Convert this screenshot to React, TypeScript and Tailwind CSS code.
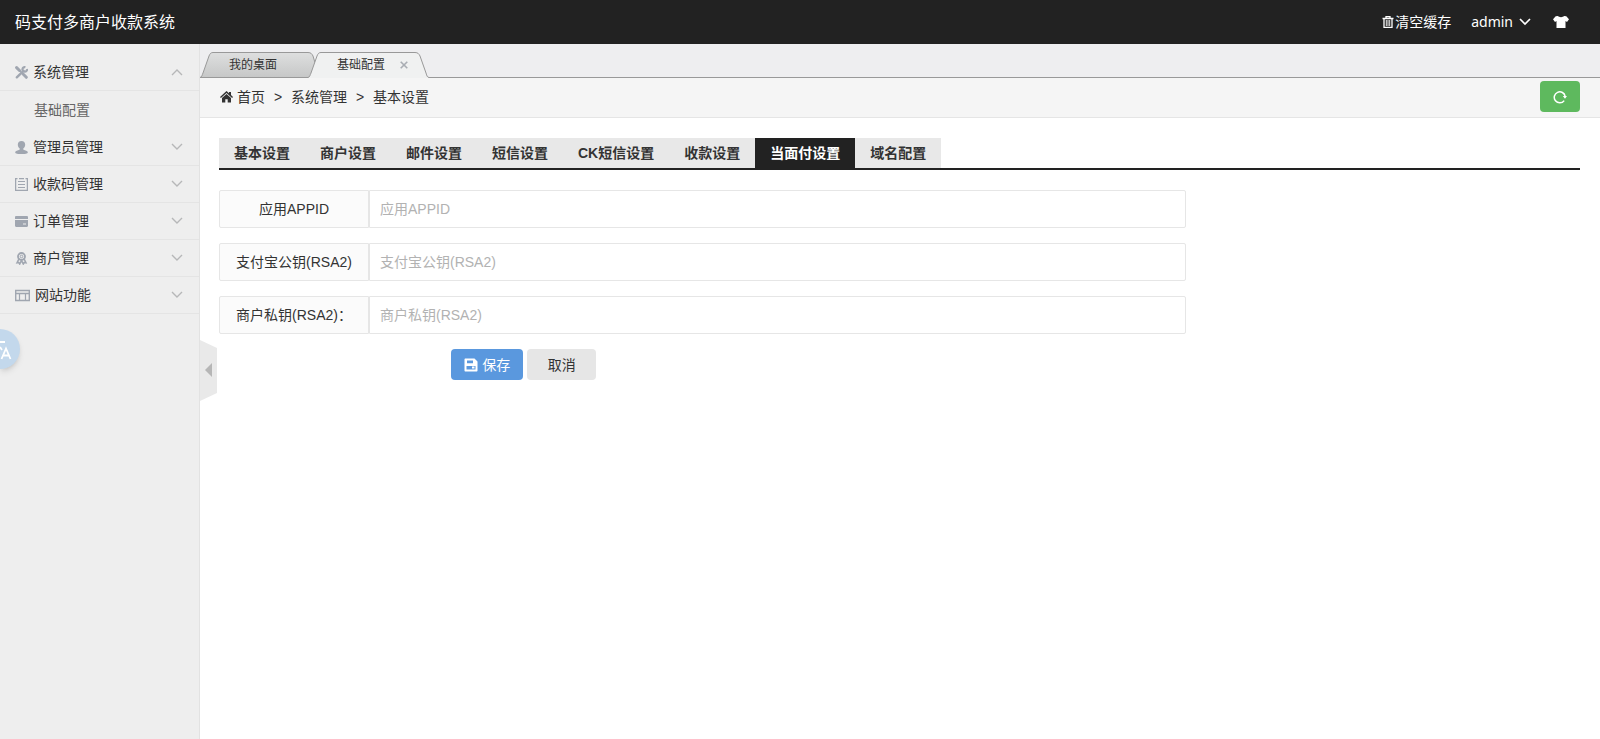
import { useState } from 'react';
import type { ReactNode } from 'react';

function ToolsIcon() {
  return (
    <svg className="size-[13px]" viewBox="0 0 13 13" fill="none" stroke="currentColor" aria-hidden="true">
      <path d="M1.600 1.600 4.500 4.500" strokeWidth="3" strokeLinecap="round" />
      <path d="M4.500 4.500l4 4" strokeWidth="1.200" />
      <path d="M8.300 8.300l3 3" strokeWidth="3" strokeLinecap="round" />
      <path d="M1.800 11.300 8.500 4.800" strokeWidth="2.400" strokeLinecap="round" />
      <path d="M10.400 1.200A2.300 2.300 0 1 0 12 3" strokeWidth="2.200" />
    </svg>
  );
}

function UserIcon() {
  return (
    <svg className="size-[13px]" viewBox="0 0 13 13" fill="currentColor" aria-hidden="true">
      <path d="M6.500 0C8.900 0 10.200 1.500 10.200 3.800 10.200 5.300 9.400 6.800 8.300 7.500v.7c0 .4.3.5.800.700 2.200.6 3.700 1.100 3.700 2.500 0 1.300-3 1.600-6.300 1.600S.2 12.700.2 11.400c0-1.400 1.500-1.900 3.700-2.500.5-.2.800-.3.800-.7v-.7C3.600 6.800 2.800 5.300 2.800 3.800 2.800 1.500 4.100 0 6.500 0z" />
    </svg>
  );
}

function ListIcon() {
  return (
    <svg className="size-[13px]" viewBox="0 0 13 13" fill="none" stroke="currentColor" aria-hidden="true">
      <path d="M2.500.6H.6v11.800h11.800V.6h-1.900M4 .6h5" strokeWidth="1.300" />
      <path d="M3 3.500h7M3 6.500h7M3 9.500h7" strokeWidth="1.100" />
    </svg>
  );
}

function CardIcon() {
  return (
    <svg className="size-[13px]" viewBox="0 0 13 13" fill="currentColor" aria-hidden="true">
      <path d="M1.200 1h10.600c.7 0 1.200.5 1.200 1.200V4H0V2.200C0 1.500.5 1 1.200 1zM0 5h13v5.800c0 .7-.5 1.200-1.200 1.200H1.200C.5 12 0 11.500 0 10.800zM8 8.500v1h3v-1z" fillRule="evenodd" />
    </svg>
  );
}

function MedalIcon() {
  return (
    <svg className="size-[13px]" viewBox="0 0 13 13" fill="none" stroke="currentColor" aria-hidden="true">
      <circle cx="6.500" cy="4.500" r="3.500" strokeWidth="1.800" />
      <circle cx="6.500" cy="4.500" r="1.300" strokeWidth="1" />
      <path d="M3.800 7.200 2 10.800l1.800-.2.900 1.500 1.800-3.600 1.800 3.600.9-1.500 1.800.2-1.800-3.600" strokeWidth="1.500" />
    </svg>
  );
}

function LayoutIcon() {
  return (
    <svg className="h-[13px] w-[15px]" viewBox="0 0 15 13" fill="none" stroke="currentColor" aria-hidden="true">
      <path d="M.700 1.500h13.600v10H.700zM.700 4.500h13.600" strokeWidth="1.400" />
      <path d="M4.500 4.500v7M10.500 4.500v7" strokeWidth="1.200" />
    </svg>
  );
}

function Chevron({ up = false, bold = false }: { up?: boolean; bold?: boolean }) {
  return (
    <svg className={up ? 'h-2 w-3 rotate-180' : 'h-2 w-3'} viewBox="0 0 12 8" fill="none" stroke="currentColor" strokeWidth={bold ? 1.7 : 1.4} aria-hidden="true">
      <path d="M1 1l5 5 5-5" />
    </svg>
  );
}

function TrashIcon() {
  return (
    <svg className="size-3" viewBox="0 0 12 12" fill="none" stroke="currentColor" aria-hidden="true">
      <path d="M.5 2.500h11M4 2.500V.7h4v1.800M2 2.500v8.800h8V2.500" strokeWidth="1.300" />
      <path d="M4.300 4v6M6 4v6M7.700 4v6" strokeWidth=".9" />
    </svg>
  );
}

function ShirtIcon() {
  return (
    <svg className="h-3 w-4" viewBox="0 0 16 12" fill="currentColor" aria-hidden="true">
      <path d="M5 0c.7 1.500 5.300 1.500 6 0l2.300.3L16 3.300l-2 2.700-1.500-.9V12h-9V5.100L2 6 0 3.300 2.700.3z" />
    </svg>
  );
}

function HomeIcon() {
  return (
    <svg className="h-3 w-[13px]" viewBox="0 0 13 12" fill="currentColor" aria-hidden="true">
      <path d="M6.500 0 9 2.300V1h2v3.100L13 6l-.9 1L6.500 2 .9 7 0 6z" />
      <path d="M6.500 2.900 11 6.900V11.500H7.700V8.300H5.300v3.200H2V6.900z" />
    </svg>
  );
}

function RefreshIcon() {
  return (
    <svg className="size-[14px]" viewBox="0 0 14 14" fill="none" stroke="currentColor" aria-hidden="true">
      <path d="M11.200 10.600A5.500 5.500 0 1 1 12.200 6.500" strokeWidth="1.500" />
      <path d="M9.800 6h4.200l-2 2.800z" fill="currentColor" stroke="none" />
    </svg>
  );
}

function SaveIcon() {
  return (
    <svg className="size-[14px]" viewBox="0 0 14 14" fill="currentColor" fillRule="evenodd" aria-hidden="true">
      <path d="M1.500.5h9L13.500 3.500v9c0 .6-.4 1-1 1h-11c-.6 0-1-.4-1-1v-11c0-.6.4-1 1-1zM3 2.500v2.700h6V2.500zM2.500 8v3.500h9V8z" />
      <path d="M8 8.500h2.500v2H8z" />
    </svg>
  );
}

type MenuEntry = { label: string; icon: ReactNode; items?: string[] };

const menu: MenuEntry[] = [
  { label: '系统管理', icon: <ToolsIcon />, items: ['基础配置'] },
  { label: '管理员管理', icon: <UserIcon /> },
  { label: '收款码管理', icon: <ListIcon /> },
  { label: '订单管理', icon: <CardIcon /> },
  { label: '商户管理', icon: <MedalIcon /> },
  { label: '网站功能', icon: <LayoutIcon /> },
];

const tabs = ['基本设置', '商户设置', '邮件设置', '短信设置', 'CK短信设置', '收款设置', '当面付设置', '域名配置'];

const fields = [
  { id: 'appid', label: '应用APPID', placeholder: '应用APPID' },
  { id: 'public-key', label: '支付宝公钥(RSA2)', placeholder: '支付宝公钥(RSA2)' },
  { id: 'private-key', label: '商户私钥(RSA2)：', placeholder: '商户私钥(RSA2)' },
];

function Header() {
  return (
    <header className="flex h-11 shrink-0 items-center justify-between bg-[#222] pr-[31px] pl-[15px] font-['Noto_Sans','Noto_Sans_CJK_SC',sans-serif] text-white">
      <a href="#" className="text-base leading-6">码支付多商户收款系统</a>
      <nav className="flex items-center gap-5 text-sm leading-5">
        <a href="#" className="flex items-center gap-px"><TrashIcon />清空缓存</a>
        <button type="button" className="flex items-center gap-1.5">admin<Chevron bold /></button>
        <button type="button" aria-label="换肤" className="pl-0.5"><ShirtIcon /></button>
      </nav>
    </header>
  );
}

function Sidebar() {
  return (
    <aside className="relative w-[200px] shrink-0 border-r border-[#e2e2e2] bg-[#eee] pt-2.5 text-sm">
      {menu.map((entry) => (
        <div key={entry.label}>
          <button type="button" className="flex h-[37px] w-full items-center gap-1 border-b border-[#e4e4e4] pr-4 pl-[15px] text-left">
            <span className="text-[#a0a6b0]">{entry.icon}</span>
            <span className="grow pl-px">{entry.label}</span>
            <span className="text-[#b6b7b8]"><Chevron up={!!entry.items} /></span>
          </button>
          {entry.items?.map((item) => (
            <a key={item} href="#" className="flex h-[38px] items-center pl-[34px] text-[#666]">{item}</a>
          ))}
        </div>
      ))}
      <button type="button" aria-label="翻译" className="absolute top-[285px] left-0 h-10 w-5 overflow-hidden rounded-r-full bg-[#c3d8ec] text-white shadow-md">
        <svg className="h-10 w-5" viewBox="0 0 20 40" fill="none" stroke="currentColor" strokeWidth="1.800" aria-hidden="true">
          <path d="M0 13h5M0 18l2 3M1.500 30 6 19.500 10.500 30M3 26.500h6" />
        </svg>
      </button>
    </aside>
  );
}

function WindowTabs() {
  return (
    <div className="relative flex h-[34px] items-end border-b border-[#999] bg-[#eeeef0] text-xs">
      <svg className="absolute top-2 left-0 h-[26px] w-[232px]" viewBox="0 0 232 26" strokeWidth="1" aria-hidden="true">
        <defs>
          <linearGradient id="idle" x1="0" y1="0" x2="0" y2="1">
            <stop offset="0" stopColor="#dedfdf" />
            <stop offset="1" stopColor="#c6c7c7" />
          </linearGradient>
        </defs>
        <path d="M0 25.500C2 25 2 23 3 21L9 4C10 1.500 11 .5 13 .5H108C111 .5 112 2 113 4L116 14 110 25.500z" fill="url(#idle)" stroke="#999" />
        <path d="M108 25.500C110 25 110 23 111 21L117 4C118 1.500 119 .5 121 .5H215C218 .5 219 2 220 4L226 21C227 24 227 25 229 25.500V26H108z" fill="#f0f1f1" />
        <path d="M108 25.500C110 25 110 23 111 21L117 4C118 1.500 119 .5 121 .5H215C218 .5 219 2 220 4L226 21C227 24 227 25 229 25.500" fill="none" stroke="#999" />
      </svg>
      <button type="button" className="relative h-6 w-[108px] pl-[29px] text-left">我的桌面</button>
      <div className="relative flex h-6 items-center pl-[29px]">
        <button type="button">基础配置</button>
        <button type="button" aria-label="关闭" className="ml-[15px] text-[#a9adb3]">
          <svg className="size-2" viewBox="0 0 8 8" stroke="currentColor" strokeWidth="1.600" aria-hidden="true">
            <path d="M.7.7l6.600 6.600M7.300.7.700 7.300" />
          </svg>
        </button>
      </div>
    </div>
  );
}

function Breadcrumb() {
  return (
    <div className="flex h-10 items-center justify-between border-b border-[#e5e5e5] bg-[#f5f5f5] pr-5 pb-0.5 pl-5">
      <nav className="flex items-center text-sm leading-5">
        <HomeIcon />
        <a href="#" className="ml-1">首页</a>
        <span className="w-[26px] text-center">&gt;</span>
        <span>系统管理</span>
        <span className="w-[26px] text-center">&gt;</span>
        <span>基本设置</span>
      </nav>
      <button type="button" aria-label="刷新" className="flex h-[31px] w-10 items-center justify-center rounded bg-[#5eb95e] text-white">
        <RefreshIcon />
      </button>
    </div>
  );
}

function SettingsPanel() {
  const [active, setActive] = useState('当面付设置');
  return (
    <div className="pt-5 pr-5 pl-[19px] text-sm">
      <div role="tablist" className="flex border-b-2 border-[#222]">
        {tabs.map((tab) => (
          <button
            key={tab}
            type="button"
            role="tab"
            aria-selected={tab === active}
            onClick={() => setActive(tab)}
            className={tab === active ? 'h-[30px] bg-[#222] px-[15px] font-bold text-white' : 'h-[30px] bg-[#e8e8e8] px-[15px] font-bold'}
          >
            {tab}
          </button>
        ))}
      </div>
      <form className="pt-5" onSubmit={(event) => event.preventDefault()}>
        {fields.map((field) => (
          <div key={field.id} className="mb-[15px] flex">
            <label htmlFor={field.id} className="flex h-[38px] w-[150px] items-center justify-center rounded-l-xs border border-[#e6e6e6] bg-[#fbfbfb] whitespace-nowrap">
              {field.label}
            </label>
            <input id={field.id} type="text" placeholder={field.placeholder} className="h-[38px] w-3/5 rounded-r-xs border border-[#e6e6e6] bg-white px-2.5 outline-none placeholder:text-[#b2b2b2]" />
          </div>
        ))}
        <div className="flex gap-1 pl-[17%]">
          <button type="submit" className="ml-px flex h-[31px] w-[72px] items-center justify-center gap-1 rounded bg-[#5a98de] text-white">
            <SaveIcon />保存
          </button>
          <button type="reset" className="h-[31px] w-[69px] rounded bg-[#e6e6e6]">取消</button>
        </div>
      </form>
    </div>
  );
}

export default function App() {
  return (
    <div className="flex min-h-screen flex-col bg-white font-['Liberation_Sans','Noto_Sans_CJK_SC',sans-serif] text-[#333]">
      <Header />
      <div className="flex grow">
        <Sidebar />
        <main className="relative min-w-0 grow">
          <WindowTabs />
          <Breadcrumb />
          <SettingsPanel />
          <button type="button" aria-label="收起菜单" className="absolute top-[296px] left-0">
            <svg className="h-[61px] w-[17px]" viewBox="0 0 17 61" aria-hidden="true">
              <path d="M0 0l17 8v45L0 61z" fill="#e9e9e9" />
              <path d="M12 23v14l-7-7z" fill="#b6b6b6" />
            </svg>
          </button>
        </main>
      </div>
    </div>
  );
}
